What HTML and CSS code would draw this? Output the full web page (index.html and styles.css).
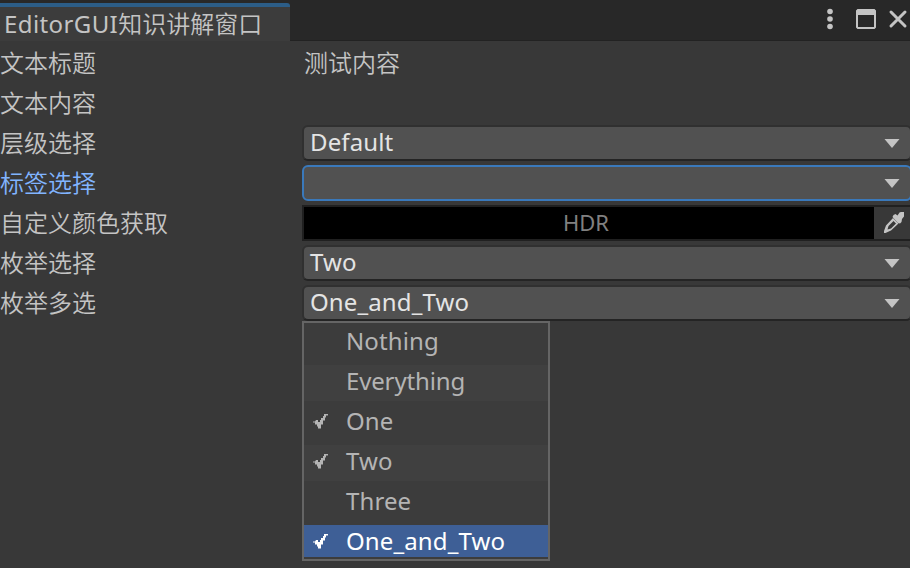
FILE: index.html
```
<!DOCTYPE html>
<html lang="zh-CN">
<head>
<meta charset="utf-8">
<title>EditorGUI知识讲解窗口</title>
<link rel="stylesheet" href="styles.css">
</head>
<body>
<header class="titlebar">
  <div class="tab"><span class="latin">EditorGUI</span>知识讲解窗口</div>
  <svg class="controls" width="90" height="40" viewBox="0 0 90 40" fill="#c4c4c4">
    <circle cx="10" cy="11.5" r="2.8"/><circle cx="10" cy="19" r="2.8"/><circle cx="10" cy="26.5" r="2.8"/>
    <path fill-rule="evenodd" d="M37.500 9h17l1.500 1.500v17l-1.500 1.500h-17l-1.500-1.500v-17zM38 15v12h16V15z"/>
    <path d="M71 12l14 14M85 12l-14 14" fill="none" stroke="#c4c4c4" stroke-width="3" stroke-linecap="round"/>
  </svg>
</header>
<main class="form">
  <div class="row"><label>文本标题</label><span class="value">测试内容</span></div>
  <div class="row"><label>文本内容</label></div>
  <div class="row"><label>层级选择</label><div class="select"><span>Default</span><svg class="arrow" width="16" height="9" viewBox="0 0 16 9"><path d="M.5 0h15L8 9z"/></svg></div></div>
  <div class="row active"><label>标签选择</label><div class="select"><svg class="arrow" width="16" height="9" viewBox="0 0 16 9"><path d="M.5 0h15L8 9z"/></svg></div></div>
  <div class="row"><label>自定义颜色获取</label><div class="color"><div class="swatch">HDR</div><div class="picker"><svg width="24" height="24" viewBox="0 0 24 24" fill="#c4c4c4"><path d="M11.500 4l2-1 2 1.500L17.500 1.500 19 1h3v4.500L20 8l-.5 3-1.500 1.500-2-.5L10.500 6z"/><path fill-rule="evenodd" d="M11 7l5.500 5.500-7.500 7-5.500 2.500H2V20L4 14.500zM11.500 10L6.500 15l-1 3.500 3.500-1 5-5z"/></svg></div></div></div>
  <div class="row"><label>枚举选择</label><div class="select"><span>Two</span><svg class="arrow" width="16" height="9" viewBox="0 0 16 9"><path d="M.5 0h15L8 9z"/></svg></div></div>
  <div class="row"><label>枚举多选</label><div class="select"><span>One_and_Two</span><svg class="arrow" width="16" height="9" viewBox="0 0 16 9"><path d="M.5 0h15L8 9z"/></svg></div>
    <div class="menu">
      <div class="item"><i></i><span>Nothing</span></div>
      <div class="item alt"><i></i><span class="tight">Everything</span></div>
      <div class="item"><svg class="check" viewBox="0 0 16 16"><path d="M0 8.500h2L3 7h2v2h2V7h1V5h2V3h1V1h4v1.500h-2v2h-1v3h-2v4H8v4H5v-2H4v-2H2v-2H0z"/></svg><span>One</span></div>
      <div class="item alt"><svg class="check" viewBox="0 0 16 16"><path d="M0 8.500h2L3 7h2v2h2V7h1V5h2V3h1V1h4v1.500h-2v2h-1v3h-2v4H8v4H5v-2H4v-2H2v-2H0z"/></svg><span>Two</span></div>
      <div class="item"><i></i><span>Three</span></div>
      <div class="item selected"><svg class="check" viewBox="0 0 16 16"><path d="M0 8.500h2L3 7h2v2h2V7h1V5h2V3h1V1h4v1.500h-2v2h-1v3h-2v4H8v4H5v-2H4v-2H2v-2H0z"/></svg><span>One_and_Two</span></div>
    </div>
  </div>
</main>
</body>
</html>
```
FILE: styles.css
```
* { box-sizing: border-box; }
body {
  margin: 0;
  height: 568px;
  overflow: hidden;
  background: #383838;
  color: #c4c4c4;
  font: 24px/36px "Noto Sans", "Noto Sans CJK SC", sans-serif;
  font-weight: 350;
}
.titlebar {
  height: 41px;
  display: flex;
  justify-content: space-between;
  background: #282828;
  border-bottom: 1px solid #222;
}
.tab {
  width: 290px;
  height: 38px;
  margin-top: 3px;
  padding-left: 4px;
  background: #3c3c3c;
  border-top: 4px solid #2c5d87;
  border-top-right-radius: 3px;
  line-height: 33px;
  white-space: nowrap;
}
.latin { font-weight: 400; letter-spacing: 0.4px; }
.controls { flex: none; }
.form { padding-top: 4px; display: grid; grid-auto-rows: 36px; row-gap: 4px; }
.row { display: grid; grid-template-columns: 302px 608px; position: relative; }
label { white-space: nowrap; }
.value { padding-left: 2px; }
.select {
  width: 610px;
  height: 36px;
  display: flex;
  align-items: center;
  padding: 0 10px 0 6px;
  background: #515151;
  border: 2px solid #303030;
  border-bottom-color: #242424;
  border-radius: 6px;
  color: #e4e4e4;
  font-weight: 400;
  letter-spacing: 0.12px;
  line-height: 32px;
}
.select span { margin-top: -2px; }
.arrow { margin-left: auto; margin-top: 1px; fill: #c4c4c4; }
.active label { color: #81b4ff; }
.active .select { border-color: #3a79bb; }
.color {
  height: 36px;
  display: flex;
  border: 2px solid #202020;
  border-right: 0;
}
.swatch {
  width: 570px;
  background: #000;
  color: #808080;
  font-size: 22px;
  font-weight: 400;
  line-height: 30px;
  text-align: center;
  padding-right: 6px;
}
.picker { width: 36px; background: #383838; padding: 4px 0 0 8px; line-height: 0; }
.menu {
  position: absolute;
  left: 302px;
  top: 36px;
  width: 248px;
  height: 240px;
  padding-top: 2px;
  border: 2px solid #656565;
  background: #3c3c3c;
  color: #b4b4b4;
  display: flex;
  flex-direction: column;
  gap: 4px;
  font-weight: 400;
  letter-spacing: 0.12px;
}
.item {
  height: 36px;
  display: grid;
  grid-template-columns: 34px 1fr;
  padding-left: 8px;
  line-height: 32px;
}
.tight { letter-spacing: -0.15px; }
.alt { background: #404040; }
.selected { height: 32px; background: #3e5f96; color: #fff; }
.check { width: 16px; height: 16px; margin: 8px 0 0 1px; fill: currentColor; }
```
